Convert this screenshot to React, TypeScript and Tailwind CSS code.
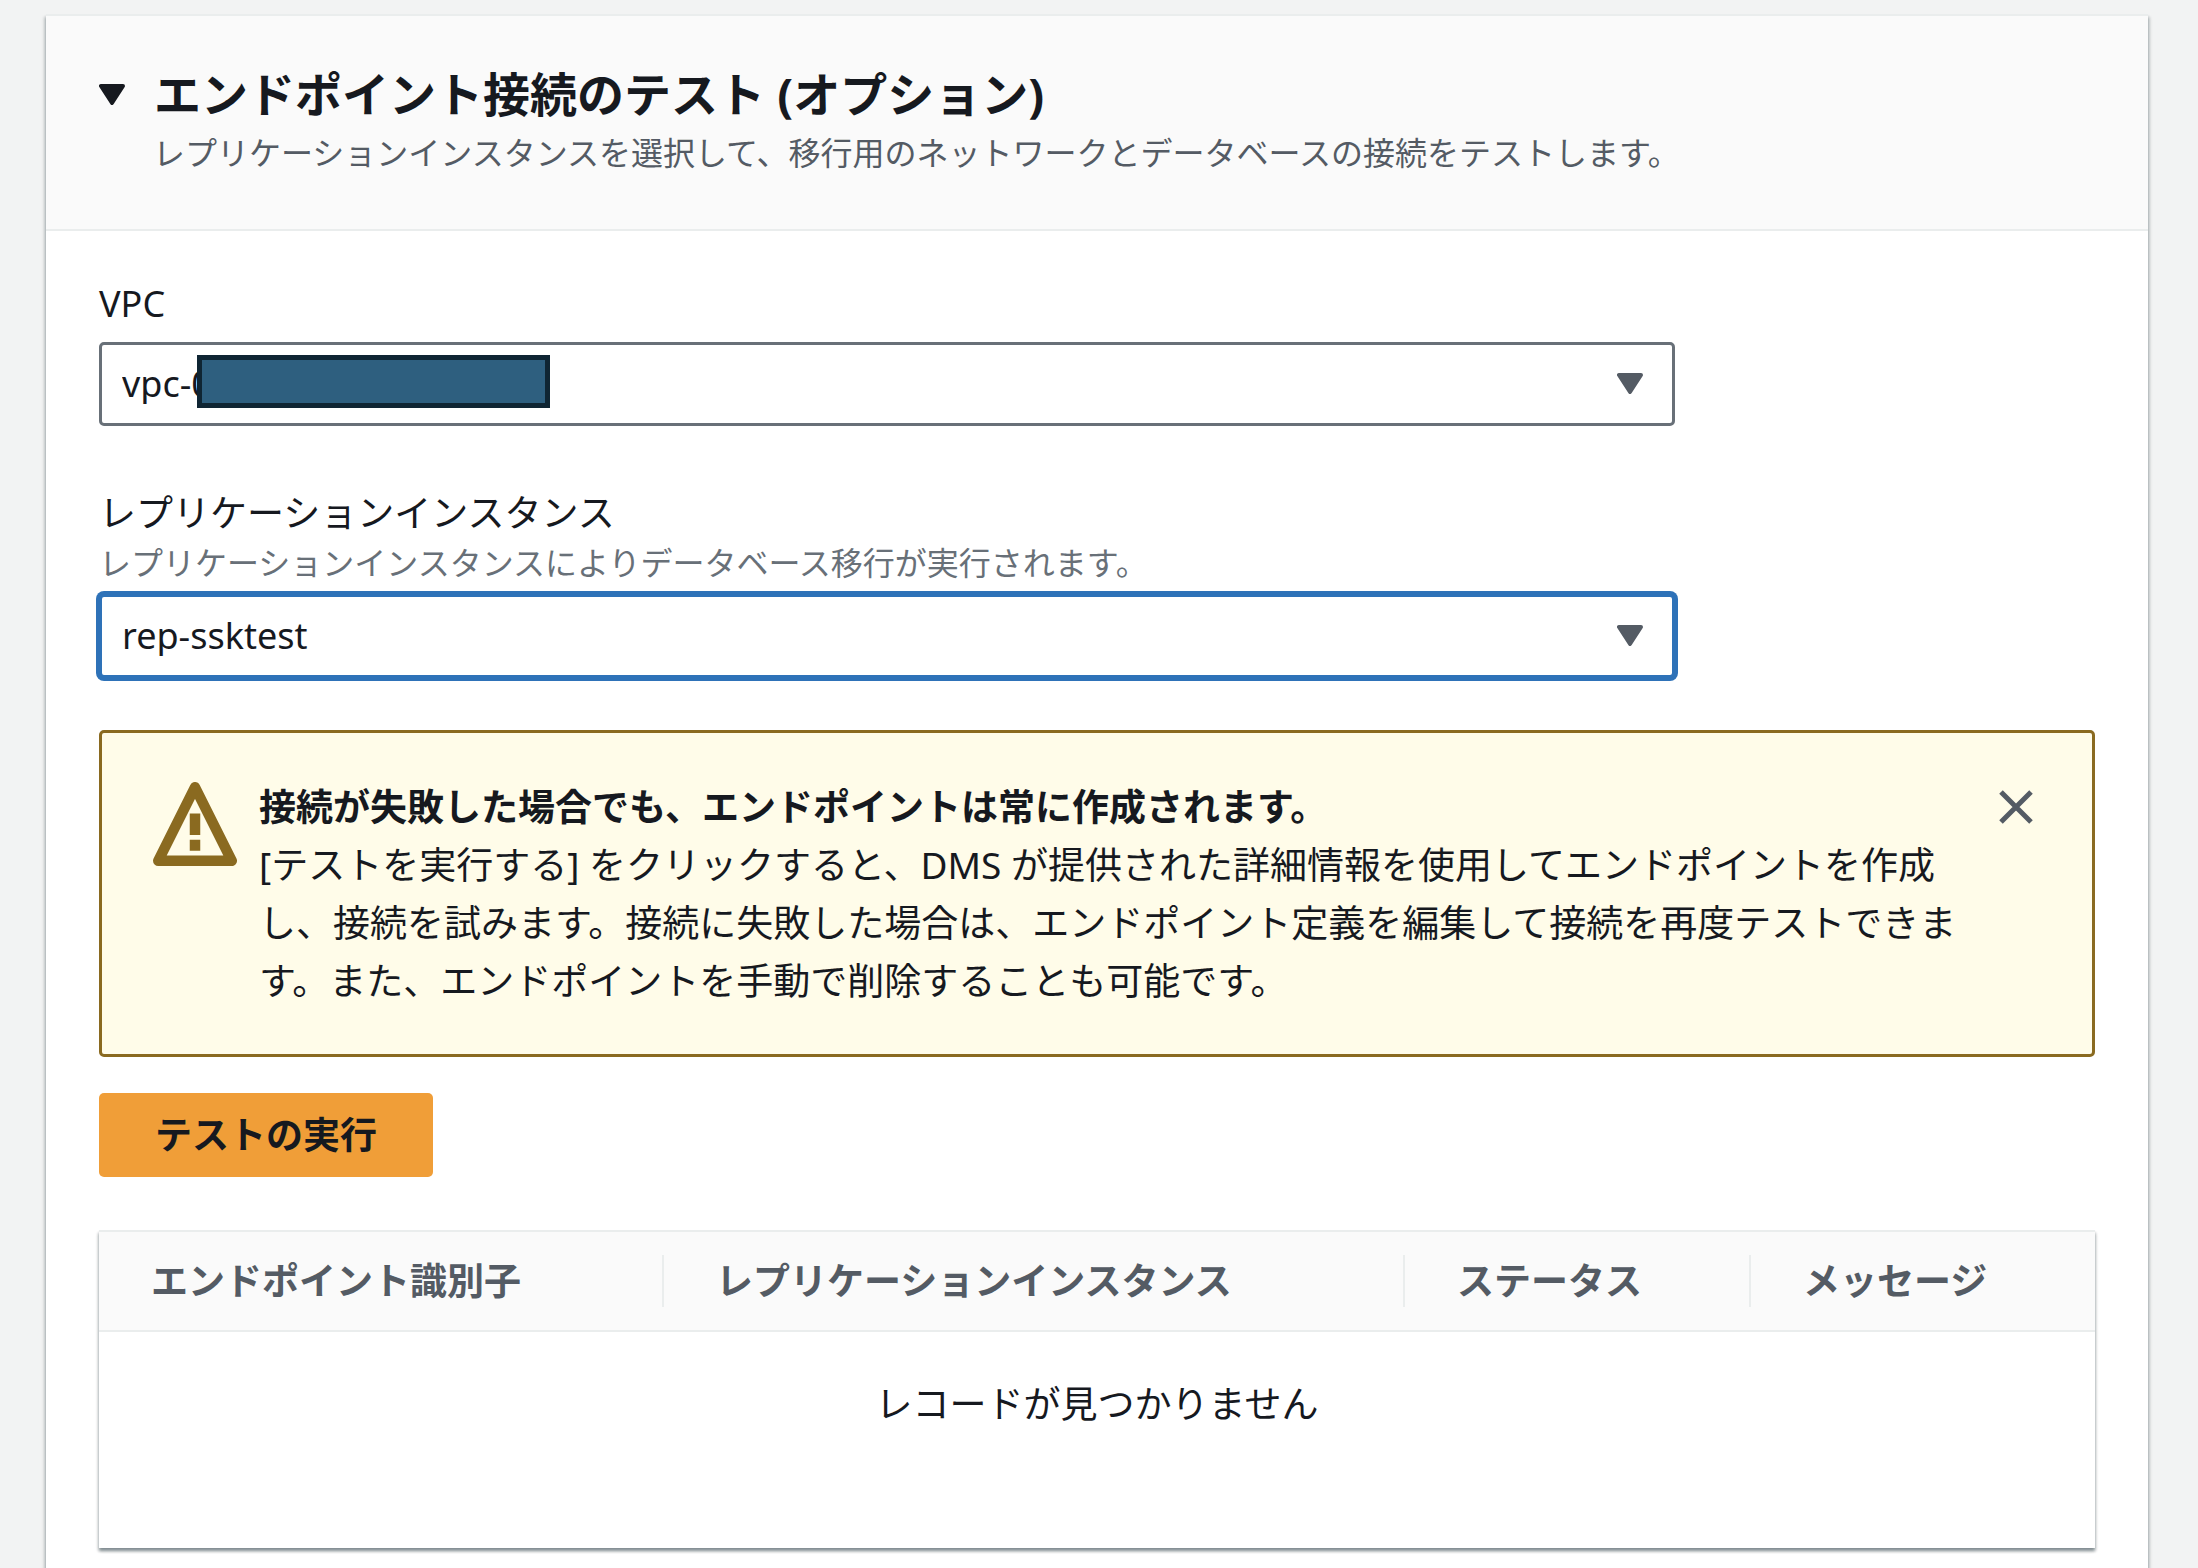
import { ReactNode, useState } from "react";

const columns = [
  { label: "エンドポイント識別子", width: "w-[565px]" },
  { label: "レプリケーションインスタンス", width: "w-[741px]" },
  { label: "ステータス", width: "w-[346px]" },
  { label: "メッセージ", width: "" },
];

function Caret({ className }: { className: string }) {
  return (
    <svg viewBox="0 0 26 21" className={`h-[21px] w-[26px] ${className}`} aria-hidden="true">
      <path d="M2 2h22L13 19z" fill="currentColor" stroke="currentColor" strokeWidth="4" strokeLinejoin="round" />
    </svg>
  );
}

function WarningIcon() {
  return (
    <svg viewBox="0 0 16 16" className="size-[84px] shrink-0 text-[#8a6a20]" aria-hidden="true">
      <path d="M8 1l7 14H1z" fill="none" stroke="currentColor" strokeWidth="2" strokeLinejoin="round" />
      <path d="M8 6v4.1M8 11v2.1" fill="none" stroke="currentColor" strokeWidth="2" />
    </svg>
  );
}

type SelectProps = {
  id: string;
  options: string[];
  active?: boolean;
  describedBy?: string;
  children?: ReactNode;
};

function Select({ id, options, active, describedBy, children }: SelectProps) {
  return (
    <div className="relative">
      <select
        id={id}
        aria-describedby={describedBy}
        className={`block h-[84px] w-full appearance-none rounded-[5px] border-3 bg-white pl-5 pr-20 text-4xl text-[#16191f] outline-none ${
          active ? "border-[#2e72b8] ring-3 ring-[#2e72b8]" : "border-[#687078]"
        }`}
      >
        {options.map((option) => (
          <option key={option}>{option}</option>
        ))}
      </select>
      {children}
      <Caret className="pointer-events-none absolute right-8 top-[31px] text-[#545b64]" />
    </div>
  );
}

export default function App() {
  const [open, setOpen] = useState(true);
  const [showAlert, setShowAlert] = useState(true);

  return (
    <div className="flex min-h-screen flex-col bg-[#f2f3f3] pl-[46px] pr-[50px] pt-[14px] font-['Noto_Sans','Noto_Sans_CJK_JP',sans-serif] text-[37px] leading-[58px] text-[#16191f]">
      <section className="grow border-t-2 border-[#eaeded] bg-white pb-[14px] shadow-[0_3px_3px_rgba(0,28,36,0.3),2px_3px_3px_rgba(0,28,36,0.15),-2px_3px_3px_rgba(0,28,36,0.15)]">
        <header className="border-b-2 border-[#eaeded] bg-[#fafafa] px-[53px] pb-[52px] pt-[49px]">
          <h2 className="text-[47px] font-bold">
            <button
              type="button"
              aria-expanded={open}
              onClick={() => setOpen(!open)}
              className="flex items-center gap-[29px] text-left"
            >
              <Caret className={open ? "" : "-rotate-90"} />
              エンドポイント接続のテスト (オプション)
            </button>
          </h2>
          <p className="pl-[54px] pt-[6px] text-[32px] leading-[48px] text-[#545b64]">
            レプリケーションインスタンスを選択して、移行用のネットワークとデータベースの接続をテストします。
          </p>
        </header>

        {open && (
          <div className="px-[53px] pt-[44px]">
            <div className="w-full max-w-[1576px]">
              <label htmlFor="vpc" className="block pb-[9px] text-4xl leading-[58px]">
                VPC
              </label>
              <Select id="vpc" options={["vpc-0"]}>
                <span className="absolute left-[98px] top-[13px] h-[53px] w-[353px] border-5 border-[#0f2533] bg-[#2e5f7f]" />
              </Select>

              <label htmlFor="instance" className="block pt-[58px]">
                レプリケーションインスタンス
              </label>
              <p id="instance-hint" className="pb-[10px] text-[32px] leading-[42px] text-[#687078]">
                レプリケーションインスタンスによりデータベース移行が実行されます。
              </p>
              <Select id="instance" options={["rep-ssktest"]} describedBy="instance-hint" active />
            </div>

            {showAlert && (
              <div
                role="alert"
                className="mt-[52px] flex items-start rounded-[5px] border-3 border-[#8a6a20] bg-[#fffce9] pb-[44px] pl-[51px] pr-[59px] pt-[45px]"
              >
                <div className="pt-1">
                  <WarningIcon />
                </div>
                <div className="ml-[22px] grow">
                  <p className="font-bold">接続が失敗した場合でも、エンドポイントは常に作成されます。</p>
                  <p>
                    [テストを実行する] をクリックすると、DMS
                    が提供された詳細情報を使用してエンドポイントを作成し、接続を試みます。接続に失敗した場合は、エンドポイント定義を編集して接続を再度テストできます。また、エンドポイントを手動で削除することも可能です。
                  </p>
                </div>
                <button
                  type="button"
                  aria-label="閉じる"
                  onClick={() => setShowAlert(false)}
                  className="ml-8 mt-3 text-[#545b64]"
                >
                  <svg viewBox="0 0 34 34" className="size-[34px]" aria-hidden="true">
                    <path d="M2 2l30 30M32 2L2 32" stroke="currentColor" strokeWidth="5" />
                  </svg>
                </button>
              </div>
            )}

            <button
              type="button"
              className="mt-9 block h-[84px] rounded-[5px] bg-[#f09e38] px-[56px] font-bold"
            >
              テストの実行
            </button>

            <div className="mt-[53px] border-t-2 border-[#eaeded] shadow-[0_3px_3px_rgba(0,28,36,0.3),1px_3px_3px_rgba(0,28,36,0.15),-1px_3px_3px_rgba(0,28,36,0.15)]">
              <table className="w-full table-fixed bg-white">
                <thead>
                  <tr className="border-b-2 border-[#eaeded] bg-[#fafafa] text-left text-[#545b64]">
                    {columns.map(({ label, width }, i) => (
                      <th key={label} className={`h-[99px] p-0 font-bold ${width}`}>
                        <div
                          className={`flex h-[52px] items-center whitespace-nowrap pl-[52px] ${
                            i < columns.length - 1 ? "border-r-2 border-[#eaeded]" : ""
                          }`}
                        >
                          {label}
                        </div>
                      </th>
                    ))}
                  </tr>
                </thead>
                <tbody>
                  <tr>
                    <td colSpan={4} className="h-[217px] pb-[72px] text-center">
                      レコードが見つかりません
                    </td>
                  </tr>
                </tbody>
              </table>
            </div>
          </div>
        )}
      </section>
    </div>
  );
}
